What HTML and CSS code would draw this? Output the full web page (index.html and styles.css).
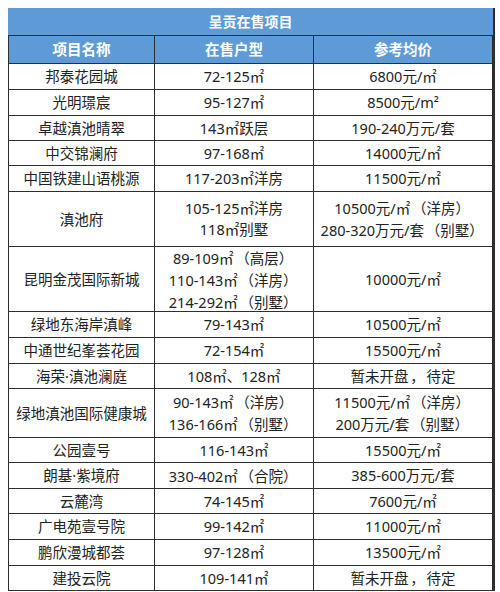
FILE: index.html
```html
<!DOCTYPE html>
<html lang="zh-CN">
<head>
<meta charset="utf-8">
<title>呈贡在售项目</title>
<link rel="stylesheet" href="styles.css">
</head>
<body>
<div class="sheet">
  <div class="cell title">呈贡在售项目</div>
  <div class="cell head">项目名称</div>
  <div class="cell head">在售户型</div>
  <div class="cell head">参考均价</div>

  <div class="cell">邦泰花园城</div><div class="cell">72-125㎡</div><div class="cell">6800元/㎡</div>
  <div class="cell">光明璟宸</div><div class="cell">95-127㎡</div><div class="cell">8500元/m²</div>
  <div class="cell">卓越滇池晴翠</div><div class="cell">143㎡跃层</div><div class="cell">190-240万元/套</div>
  <div class="cell">中交锦澜府</div><div class="cell">97-168㎡</div><div class="cell">14000元/㎡</div>
  <div class="cell">中国铁建山语桃源</div><div class="cell">117-203㎡洋房</div><div class="cell">11500元/㎡</div>
  <div class="cell">滇池府</div><div class="cell">105-125㎡洋房<br>118㎡别墅</div><div class="cell">10500元/㎡<span class="note">（洋房）</span><br>280-320万元/套<span class="note">（别墅）</span></div>
  <div class="cell">昆明金茂国际新城</div><div class="cell">89-109㎡<span class="note">（高层）</span><br>110-143㎡<span class="note">（洋房）</span><br>214-292㎡<span class="note">（别墅）</span></div><div class="cell">10000元/㎡</div>
  <div class="cell">绿地东海岸滇峰</div><div class="cell">79-143㎡</div><div class="cell">10500元/㎡</div>
  <div class="cell">中通世纪峯荟花园</div><div class="cell">72-154㎡</div><div class="cell">15500元/㎡</div>
  <div class="cell">海荣·滇池澜庭</div><div class="cell">108㎡、128㎡</div><div class="cell">暂未开盘<span class="note">，</span>待定</div>
  <div class="cell">绿地滇池国际健康城</div><div class="cell">90-143㎡<span class="note">（洋房）</span><br>136-166㎡<span class="note">（别墅）</span></div><div class="cell">11500元/㎡<span class="note">（洋房）</span><br>200万元/套<span class="note">（别墅）</span></div>
  <div class="cell">公园壹号</div><div class="cell">116-143㎡</div><div class="cell">15500元/㎡</div>
  <div class="cell">朗基·紫境府</div><div class="cell">330-402㎡<span class="note">（合院）</span></div><div class="cell">385-600万元/套</div>
  <div class="cell">云麓湾</div><div class="cell">74-145㎡</div><div class="cell">7600元/㎡</div>
  <div class="cell">广电苑壹号院</div><div class="cell">99-142㎡</div><div class="cell">11000元/㎡</div>
  <div class="cell">鹏欣漫城都荟</div><div class="cell">97-128㎡</div><div class="cell">13500元/㎡</div>
  <div class="cell">建投云院</div><div class="cell">109-141㎡</div><div class="cell">暂未开盘<span class="note">，</span>待定</div>
</div>
</body>
</html>
```

FILE: styles.css
```css
html, body {
  margin: 0;
  padding: 0;
  background: #ffffff;
}

body {
  padding: 8px;
  font-family: "Noto Sans", "Noto Sans CJK SC", sans-serif;
}

.sheet {
  width: 485px;
  display: grid;
  grid-template-columns: 145px 158px 178px;
  grid-template-rows: 27px 27px 25px 25px 24px 24px 25px 54px 64px 25px 25px 24px 48px 24px 25px 24px 25px 25px 24px;
  gap: 1px;
  padding: 0 1px 1px 1px;
  background: #2e2e2e;
}

.cell {
  background: #ffffff;
  color: #222222;
  font-size: 14.5px;
  line-height: 21px;
  display: flex;
  flex-direction: column;
  align-items: center;
  justify-content: center;
  text-align: center;
  white-space: nowrap;
  display: block;
  align-content: center;
}

.note {
  font-family: "Noto Sans CJK SC", sans-serif;
  text-spacing-trim: space-all;
  font-feature-settings: "fwid" 1;
  margin: 0 0.12em;
}

.title {
  grid-column: 1 / 4;
  background: #5e9bd6;
  color: #ffffff;
  font-weight: bold;
  font-size: 14px;
  margin: 0 -1px;
}

.head {
  background: #5e9bd6;
  color: #ffffff;
  font-weight: bold;
}
```
